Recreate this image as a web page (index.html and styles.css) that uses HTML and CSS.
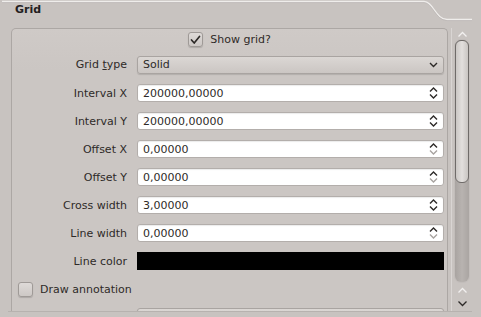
FILE: index.html
```html
<!DOCTYPE html>
<html lang="en">

<head>
    <meta charset="UTF-8">
    <title>Grid</title>
    <link rel="stylesheet" href="styles.css">
</head>

<body>
    <header class="tab">
        <svg class="tab-line" width="481" height="28" viewBox="0 0 481 28">
            <path d="M2 1.5 H424 C433 1.5 436 19.5 447 19.5 H472" fill="none" stroke="#efedeb" stroke-width="1.3" />
            <path d="M2 2.6 H424 C432.5 2.6 435.5 20.6 447 20.6 H472" fill="none" stroke="#b9b4b1" stroke-width="0.6" />
        </svg>
        <h1 class="tab-title">Grid</h1>
    </header>

    <div class="scroll">
        <div class="viewport">
            <section class="group">
                <div class="row row-first">
                    <label class="check check-center">
                        <span class="box">
                            <svg width="11" height="10" viewBox="0 0 11 10">
                                <path d="M1.5 5 L4.2 8 L9.5 1.5" fill="none" stroke="#2d2a28" stroke-width="1.7" stroke-linecap="round" stroke-linejoin="round" />
                            </svg>
                        </span>
                        Show grid?
                    </label>
                </div>

                <div class="row">
                    <span class="label">Grid <u>t</u>ype</span>
                    <div class="combo">
                        <span>Solid</span>
                        <svg width="9" height="6" viewBox="0 0 9 6">
                            <path d="M1 1 L4.5 4.5 L8 1" fill="none" stroke="#2d2a28" stroke-width="1.4" />
                        </svg>
                    </div>
                </div>

                <div class="row">
                    <span class="label">Interval X</span>
                    <div class="spin"><span>200000,00000</span><span class="arrows"><svg width="9" height="14" viewBox="0 0 9 14"><path class="up" d="M1 5.5 L4.5 2 L8 5.5" /><path class="down" d="M1 8.5 L4.5 12 L8 8.5" /></svg></span></div>
                </div>

                <div class="row">
                    <span class="label">Interval Y</span>
                    <div class="spin"><span>200000,00000</span><span class="arrows"><svg width="9" height="14" viewBox="0 0 9 14"><path class="up" d="M1 5.5 L4.5 2 L8 5.5" /><path class="down" d="M1 8.5 L4.5 12 L8 8.5" /></svg></span></div>
                </div>

                <div class="row">
                    <span class="label">Offset X</span>
                    <div class="spin"><span>0,00000</span><span class="arrows"><svg width="9" height="14" viewBox="0 0 9 14"><path class="up" d="M1 5.5 L4.5 2 L8 5.5" /><path class="down off" d="M1 8.5 L4.5 12 L8 8.5" /></svg></span></div>
                </div>

                <div class="row">
                    <span class="label">Offset Y</span>
                    <div class="spin"><span>0,00000</span><span class="arrows"><svg width="9" height="14" viewBox="0 0 9 14"><path class="up" d="M1 5.5 L4.5 2 L8 5.5" /><path class="down off" d="M1 8.5 L4.5 12 L8 8.5" /></svg></span></div>
                </div>

                <div class="row">
                    <span class="label">Cross width</span>
                    <div class="spin"><span>3,00000</span><span class="arrows"><svg width="9" height="14" viewBox="0 0 9 14"><path class="up" d="M1 5.5 L4.5 2 L8 5.5" /><path class="down" d="M1 8.5 L4.5 12 L8 8.5" /></svg></span></div>
                </div>

                <div class="row">
                    <span class="label">Line width</span>
                    <div class="spin"><span>0,00000</span><span class="arrows"><svg width="9" height="14" viewBox="0 0 9 14"><path class="up" d="M1 5.5 L4.5 2 L8 5.5" /><path class="down off" d="M1 8.5 L4.5 12 L8 8.5" /></svg></span></div>
                </div>

                <div class="row">
                    <span class="label">Line color</span>
                    <div class="swatch"></div>
                </div>

                <div class="row">
                    <label class="check check-left">
                        <span class="box"></span>
                        Draw annotation
                    </label>
                </div>

                <div class="row">
                    <span class="label">Annotation position</span>
                    <div class="combo">
                        <span>Outside frame</span>
                    </div>
                </div>
            </section>
        </div>

        <div class="scrollbar">
            <svg class="sb-arrow" width="11" height="7" viewBox="0 0 11 7"><path d="M1.5 5.5 L5.5 1.5 L9.5 5.5" /></svg>
            <div class="groove">
                <div class="handle"></div>
            </div>
            <svg class="sb-arrow" width="11" height="7" viewBox="0 0 11 7"><path d="M1.5 5.5 L5.5 1.5 L9.5 5.5" /></svg>
            <svg class="sb-arrow sb-down" width="11" height="7" viewBox="0 0 11 7"><path d="M1.5 1.5 L5.5 5.5 L9.5 1.5" /></svg>
        </div>
    </div>
</body>

</html>
```

FILE: styles.css
```css
:root {
    --color-window: #c8c3c0;
    --color-panel: #cbc6c3;
    --color-text: #2e2a28;
    --color-border: #aca7a4;
}

html,
body {
    margin: 0;
    padding: 0;
}

body {
    width: 481px;
    height: 317px;
    overflow: hidden;
    background-color: var(--color-window);
    color: var(--color-text);
    font-family: "DejaVu Sans", sans-serif;
    font-size: 11px;
}

/* tab header */

.tab {
    display: grid;
    height: 28px;
}

.tab-line,
.tab-title {
    grid-area: 1 / 1;
}

.tab-title {
    margin: 0;
    padding: 3px 0 0 15px;
    font-size: 11px;
    font-weight: bold;
    line-height: 14px;
    color: #232020;
}

/* scroll area */

.scroll {
    display: flex;
    height: 283px;
    width: 464px;
    margin-left: 8px;
    border-bottom: 1px solid #b7b2af;
}

.viewport {
    flex: 1;
    overflow: hidden;
    padding-left: 3px;
    border-right: 1px solid #d9d5d3;
}

.group {
    width: 437px;
    min-height: 320px;
    box-sizing: border-box;
    border: 1px solid var(--color-border);
    border-bottom: none;
    border-radius: 5px 5px 0 0;
    background: linear-gradient(#cfcac7, var(--color-panel) 40px);
    display: grid;
    grid-template-columns: 115px 307px;
    grid-template-rows: 21px 29px;
    column-gap: 10px;
    grid-auto-rows: 28px;
    align-items: center;
    align-content: start;
}

.row {
    display: contents;
}

.label {
    text-align: right;
    white-space: nowrap;
}

.check {
    grid-column: 1 / -1;
    display: flex;
    align-items: center;
    gap: 7px;
}

.check-center {
    justify-content: center;
    padding-left: 3px;
}

.check-left {
    padding-left: 6px;
}

.box {
    width: 13px;
    height: 13px;
    border: 1px solid #9f9a97;
    border-radius: 3px;
    background: linear-gradient(#dedad8, #cdc8c5);
    box-shadow: 0 1px 1px rgba(0, 0, 0, 0.15);
    display: flex;
    align-items: center;
    justify-content: center;
}

.combo,
.spin,
.swatch {
    height: 18px;
    box-sizing: border-box;
    display: flex;
    align-items: center;
    justify-content: space-between;
    padding: 0 5px 0 5px;
}

.combo {
    border: 1px solid #a9a4a1;
    border-radius: 3px;
    background: linear-gradient(#dbd7d4, #cbc6c3);
    box-shadow: 0 1px 1px rgba(0, 0, 0, 0.12);
}

.spin {
    background-color: white;
    border: 1px solid #b3aeab;
    border-radius: 3px;
    box-shadow: inset 0 1px 1px rgba(0, 0, 0, 0.08);
}

.arrows {
    display: flex;
}

.arrows path {
    fill: none;
    stroke: #2d2a28;
    stroke-width: 1.4;
}

.arrows path.off {
    stroke: #a8a3a0;
}

.swatch {
    background-color: black;
}

/* scrollbar */

.scrollbar {
    width: 20px;
    display: flex;
    flex-direction: column;
    align-items: center;
    gap: 6px;
    padding-top: 3px;
}

.sb-arrow {
    flex: none;
}

.sb-arrow path {
    fill: none;
    stroke: #f2f0ef;
    stroke-width: 1.3;
}

.sb-down path {
    stroke: #2d2a28;
}

.groove {
    width: 14px;
    height: 242px;
    margin: -4px 0 -1px;
    flex: none;
    box-sizing: border-box;
    border-radius: 6px;
    background: linear-gradient(90deg, #a9a4a1, #b8b3b0 50%, #aaa5a2);
    box-shadow: 0 0 0 1px #c2bdba;
}

.handle {
    height: 143px;
    box-sizing: border-box;
    border: 1px solid #6f6b69;
    border-radius: 6px;
    background: linear-gradient(90deg, #cbc7c4, #e2dfdd 50%, #c9c5c2);
}
```
